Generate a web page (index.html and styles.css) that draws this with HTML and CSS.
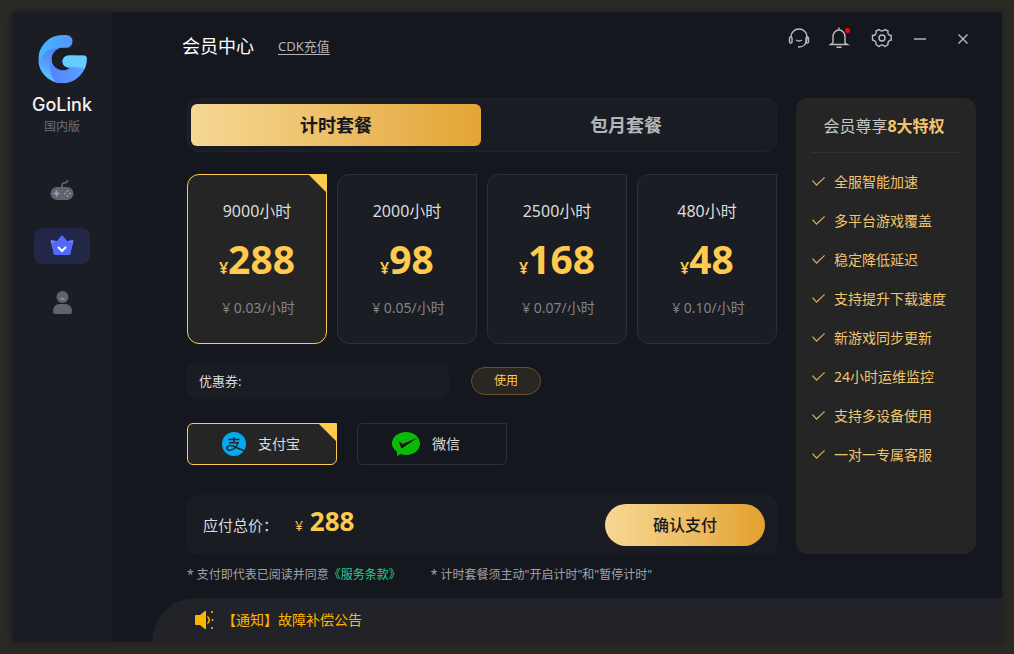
FILE: index.html
```html
<!DOCTYPE html>
<html lang="zh-CN">
<head>
    <meta charset="UTF-8">
    <meta name="viewport" content="width=device-width, initial-scale=1.0">
    <title>GoLink 会员中心</title>
    <link rel="stylesheet" href="styles.css">
</head>
<body>
    <div class="window">
        <aside class="sidebar">
            <svg class="logo" viewBox="0 0 146 146" aria-hidden="true">
                <defs>
                    <clipPath id="g-shape">
                        <path d="M73 0H84A19 19 0 0 1 84 38H74A34 34 0 1 0 97 97H91A18 18 0 0 1 91 61H136Q145 61 145 70A72 72 0 1 1 73 0Z"/>
                    </clipPath>
                    <linearGradient id="g-top" x1="0" y1="0" x2="1" y2="0">
                        <stop offset="0" stop-color="#3fbaff"/>
                        <stop offset="1" stop-color="#5a90fc"/>
                    </linearGradient>
                    <linearGradient id="g-left" x1="0.7" y1="0" x2="0.3" y2="1">
                        <stop offset="0" stop-color="#5580fb"/>
                        <stop offset="0.4" stop-color="#5595fc"/>
                        <stop offset="1" stop-color="#5fd0ff"/>
                    </linearGradient>
                    <linearGradient id="g-bottom" x1="0" y1="0" x2="1" y2="0">
                        <stop offset="0" stop-color="#5383ff"/>
                        <stop offset="1" stop-color="#5fa2fe"/>
                    </linearGradient>
                </defs>
                <g clip-path="url(#g-shape)">
                    <rect width="110" height="110" fill="url(#g-top)"/>
                    <path d="M0 84Q16 44 58 38L74 72L60 146H0Z" fill="url(#g-left)"/>
                    <path d="M40 70Q32 104 44 128L54 146H146V60H70V90Z" fill="url(#g-bottom)"/>
                    <path d="M70 58H146V106Q122 92 96 97H70Z" fill="#63cdff"/>
                </g>
            </svg>
            <div class="brand">GoLink</div>
            <div class="edition">国内版</div>
            <nav class="side-nav" aria-label="主导航">
                <a href="#games" aria-label="游戏">
                    <svg width="24" height="24" viewBox="0 0 24 24">
                        <path d="M12 9V7Q12 5.500 13.500 5.200L16 4.700Q17.500 4.300 17.500 2" fill="none" stroke="#5d6370" stroke-width="1.800"/>
                        <rect x="0.5" y="9" width="23" height="13" rx="6.5" fill="#5d6370"/>
                        <path d="M6.500 12.500V18.500M3.500 15.500H9.500" stroke="#9ea3ad" stroke-width="1.600"/>
                        <g fill="#9ea3ad"><circle cx="17.500" cy="13" r="0.900"/><circle cx="17.500" cy="18" r="0.900"/><circle cx="15" cy="15.500" r="0.900"/><circle cx="20" cy="15.500" r="0.900"/></g>
                    </svg>
                </a>
                <a class="active" href="#member" aria-label="会员">
                    <svg width="24" height="24" viewBox="0 0 24 24">
                        <path d="M0.500 7Q0.500 6 2 6L6 7L18 7L22 6Q23.500 6 23.500 7L20 20H4Z" fill="#6c80fa"/>
                        <path d="M2 9L6.500 7.500L11 2Q12 1 13 2L17.500 7.500L22.500 9L20.500 20Q20.300 21 19.500 21H4.700Q3.900 21 3.700 20Z" fill="#5269ff"/>
                        <path d="M8 13L12 17L16 13" fill="none" stroke="#fff" stroke-width="2"/>
                    </svg>
                </a>
                <a href="#user" aria-label="我的">
                    <svg width="24" height="24" viewBox="0 0 24 24">
                        <circle cx="12.500" cy="7" r="6" fill="#5d6370"/>
                        <path d="M10 8H15A2.500 2 0 0 1 10 8Z" fill="#9095a0"/>
                        <path d="M3 22Q3 14 10 14H15Q22 14 22 22Q22 24 20 24H5Q3 24 3 22Z" fill="#5d6370"/>
                    </svg>
                </a>
            </nav>
        </aside>

        <main class="main">
            <header class="topbar">
                <h1>会员中心</h1>
                <a class="cdk" href="#cdk">CDK充值</a>
                <div class="tools">
                    <button type="button" aria-label="客服">
                        <svg width="22" height="22" viewBox="0 0 22 22">
                            <path d="M3 10V9.500A8 7.500 0 0 1 19 9.500V12Q18 20 11 20H10"/>
                            <rect x="1.500" y="10" width="2.500" height="6" rx="1.200"/>
                            <rect x="18" y="10" width="2.500" height="6" rx="1.200"/>
                            <path d="M8 13Q11 15 14 13"/>
                        </svg>
                    </button>
                    <button class="bell" type="button" aria-label="消息">
                        <svg width="22" height="22" viewBox="0 0 22 22">
                            <path d="M4 16V9.500A6 6.500 0 0 1 16 9.500V16L18.500 17.500H1.500L4 16M10 0.500V3M7.500 20.300H12.500"/>
                        </svg>
                    </button>
                    <button type="button" aria-label="设置">
                        <svg width="22" height="22" viewBox="0 0 22 22">
                            <path d="M9 2.500Q10.500 4 12 4T15 2.500L18 4Q17.500 6.500 18.500 7.500T21.200 8.500V13Q19.500 13 18.500 14.500T18 17.500L15 19.500Q13.500 18 12 18T9 19.500L6 17.500Q6.500 15.500 5.500 14.500T2.500 13V8.500Q4.500 8.500 5.500 7.500T6 4Z"/>
                            <circle cx="12" cy="11" r="3"/>
                        </svg>
                    </button>
                    <button type="button" aria-label="最小化">
                        <svg width="22" height="22" viewBox="0 0 22 22"><path d="M3 12H15"/></svg>
                    </button>
                    <button type="button" aria-label="关闭">
                        <svg width="22" height="22" viewBox="0 0 22 22"><path d="M6.500 7.500L15.500 16.500M15.500 7.500L6.500 16.500"/></svg>
                    </button>
                </div>
            </header>

            <div class="content">
                <form class="order">
                    <div class="tabs">
                        <button class="active" type="button">计时套餐</button>
                        <button type="button">包月套餐</button>
                    </div>

                    <div class="plans">
                        <label class="option plan">
                            <input type="radio" name="plan" checked>
                            <span class="hours">9000小时</span>
                            <span class="price"><small>¥</small>288</span>
                            <span class="rate">¥ 0.03/小时</span>
                        </label>
                        <label class="option plan">
                            <input type="radio" name="plan">
                            <span class="hours">2000小时</span>
                            <span class="price"><small>¥</small>98</span>
                            <span class="rate">¥ 0.05/小时</span>
                        </label>
                        <label class="option plan">
                            <input type="radio" name="plan">
                            <span class="hours">2500小时</span>
                            <span class="price"><small>¥</small>168</span>
                            <span class="rate">¥ 0.07/小时</span>
                        </label>
                        <label class="option plan">
                            <input type="radio" name="plan">
                            <span class="hours">480小时</span>
                            <span class="price"><small>¥</small>48</span>
                            <span class="rate">¥ 0.10/小时</span>
                        </label>
                    </div>

                    <div class="coupon">
                        <div class="coupon-box">
                            <label for="coupon">优惠券:</label>
                            <input type="text" id="coupon">
                        </div>
                        <button type="button">使用</button>
                    </div>

                    <div class="payments">
                        <label class="option payment">
                            <input type="radio" name="payment" checked>
                            <svg width="24" height="24" viewBox="0 0 24 24">
                                <circle cx="12" cy="12" r="12" fill="#02a9f1"/>
                                <path d="M6.500 7.500H17.500M12 5V10.500M7 10.800H16Q15 14.500 11.500 17Q8.500 19 6 17.800Q4 16.500 5.500 14.500Q8 12.500 13 15L23 19" fill="none" stroke="#252525" stroke-width="1.500"/>
                            </svg>
                            <span>支付宝</span>
                        </label>
                        <label class="option payment">
                            <input type="radio" name="payment">
                            <svg width="28" height="24" viewBox="0 0 28 24">
                                <path d="M14 0C22 0 28 5 28 11.500S22 23 14 23Q11.500 23 9 22L5 24V19.800Q0 16.500 0 11.500C0 5 6 0 14 0Z" fill="#09bb07"/>
                                <path d="M6.500 9L10.500 12L26 5.500L10.500 16Q9.500 16.500 9 15.500Z" fill="#14171e"/>
                            </svg>
                            <span>微信</span>
                        </label>
                    </div>

                    <div class="total">
                        <span class="total-label">应付总价：</span>
                        <span class="amount"><small>¥</small> 288</span>
                        <button type="submit">确认支付</button>
                    </div>

                    <div class="notes">
                        <span>* 支付即代表已阅读并同意<a href="#terms">《服务条款》</a></span>
                        <span>* 计时套餐须主动"开启计时"和"暂停计时"</span>
                    </div>
                </form>

                <section class="benefits">
                    <h2>会员尊享<b>8大特权</b></h2>
                    <ul>
                        <li>全服智能加速</li>
                        <li>多平台游戏覆盖</li>
                        <li>稳定降低延迟</li>
                        <li>支持提升下载速度</li>
                        <li>新游戏同步更新</li>
                        <li>24小时运维监控</li>
                        <li>支持多设备使用</li>
                        <li>一对一专属客服</li>
                    </ul>
                </section>
            </div>

            <footer class="notice">
                <svg width="20" height="20" viewBox="0 0 20 20" aria-hidden="true">
                    <path d="M1 5H5L10 1H11V19H10L5 15H1Q0 15 0 14V6Q0 5 1 5Z" fill="#ffb400"/>
                    <path d="M12.500 6.500Q16 10 12.500 13.500" fill="none" stroke="#ffb400" stroke-width="1.500"/>
                    <g fill="#ffb400"><circle cx="17" cy="2" r="1"/><circle cx="17.500" cy="10" r="1"/><circle cx="17" cy="18" r="1"/></g>
                </svg>
                <a href="#notice">【通知】故障补偿公告</a>
            </footer>
        </main>
    </div>
</body>
</html>
```
FILE: styles.css
```css
* {
    box-sizing: border-box;
}
body {
    display: flex;
    min-height: 100vh;
    margin: 0;
    padding: 12px;
    background: #292a24;
    color: #dcdcdc;
    font-family: "Noto Sans", "Noto Sans CJK SC", sans-serif;
    font-size: 14px;
    line-height: 20px;
}
button, input {
    font: inherit;
    color: inherit;
}
button {
    padding: 0;
    border: none;
    background: none;
    cursor: pointer;
}
.window {
    flex: 1;
    display: flex;
    background: #14171e;
    box-shadow: 0 0 8px rgba(0, 0, 0, 0.3);
}

/* sidebar */
.sidebar {
    flex: none;
    width: 100px;
    padding-top: 23px;
    display: flex;
    flex-direction: column;
    align-items: center;
    background: #1b1d24;
}
.logo {
    width: 49px;
    height: 49px;
}
.brand {
    margin-top: 9px;
    color: #f2f2f2;
    font-family: Inter, sans-serif;
    font-size: 18px;
    line-height: 24px;
    font-weight: 500;
}
.edition {
    margin-top: 1px;
    color: #6b6e78;
    font-size: 12px;
    line-height: 18px;
}
.side-nav {
    margin-top: 36px;
    display: flex;
    flex-direction: column;
    gap: 20px;
}
.side-nav a {
    width: 56px;
    height: 36px;
    display: flex;
    align-items: center;
    justify-content: center;
    border-radius: 8px;
}
.side-nav .active {
    background: #222747;
}

/* main area */
.main {
    flex: 1;
    min-width: 0;
    display: flex;
    flex-direction: column;
}
.topbar {
    height: 68px;
    padding: 0 28px 0 70px;
    display: flex;
    align-items: center;
}
h1 {
    margin: 0;
    color: #fff;
    font-size: 18px;
    font-weight: 400;
}
.cdk {
    margin-left: 24px;
    color: #b4b5b7;
    font-size: 13px;
    text-underline-offset: 3px;
}
.tools {
    align-self: flex-start;
    margin-left: auto;
    padding-top: 15px;
    display: flex;
    gap: 19px;
}
.tools button {
    position: relative;
    height: 22px;
}
.tools svg {
    display: block;
    fill: none;
    stroke: #bbbcbe;
    stroke-width: 1.4px;
}
.bell::after {
    content: "";
    position: absolute;
    top: 1px;
    right: 1px;
    width: 5px;
    height: 5px;
    border-radius: 50%;
    background: #f00;
}
.content {
    display: flex;
    align-items: flex-start;
    gap: 19px;
    padding: 18px 26px 12px 75px;
}
.order {
    flex: 1;
    min-width: 0;
}
.tabs {
    display: flex;
    padding: 5px 5px 5px 3px;
    border: 1px solid #20232a;
    border-radius: 12px;
    background: #191c23;
}
.tabs button {
    flex: 1;
    height: 42px;
    border-radius: 6px;
    color: #b4b5b7;
    font-size: 18px;
    font-weight: 700;
}
.tabs .active {
    color: #16181e;
    background: linear-gradient(90deg, #f6d894, #ebb95d 60%, #e3a534);
}

/* selectable cards */
.option {
    position: relative;
    display: flex;
    align-items: center;
    overflow: hidden;
    border: 1px solid #2d3037;
    cursor: pointer;
}
.option input {
    position: absolute;
    inset: 0;
    margin: 0;
    appearance: none;
    cursor: pointer;
}
.option:has(input:checked) {
    border-color: #ffcb4f;
    background: #252525;
}
.option:has(input:checked)::after {
    content: "";
    position: absolute;
    top: 0;
    right: 0;
    width: 17px;
    height: 17px;
    background: #ffcb4f;
    clip-path: polygon(0 0, 100% 0, 100% 100%);
}
.plans {
    display: grid;
    grid-template-columns: repeat(4, 1fr);
    gap: 10px;
    margin-top: 22px;
}
.plan {
    flex-direction: column;
    height: 170px;
    padding-top: 24px;
    border-radius: 12px 0 12px 12px;
    background: #1a1d24;
}
.hours {
    font-size: 16px;
    line-height: 24px;
}
.price {
    margin-top: 10px;
    color: #ffcb4f;
    font-size: 39px;
    line-height: 52px;
    font-weight: 700;
}
.price small {
    font-size: 16px;
    font-weight: 600;
}
.rate {
    margin-top: 4px;
    padding-left: 3px;
    color: #828385;
}
.coupon {
    display: flex;
    align-items: center;
    gap: 22px;
    margin-top: 19px;
    font-size: 13px;
}
.coupon-box {
    display: flex;
    align-items: center;
    width: 262px;
    height: 36px;
    padding: 0 12px;
    border-radius: 8px;
    background: #191c23;
}
.coupon-box input {
    flex: 1;
    min-width: 0;
    border: none;
    outline: none;
    background: none;
}
.coupon button {
    width: 70px;
    height: 28px;
    border: 1px solid #64522d;
    border-radius: 14px;
    background: #2a2622;
    color: #ffcb4f;
    font-size: 12px;
}
.payments {
    display: flex;
    gap: 20px;
    margin-top: 24px;
}
.payment {
    gap: 12px;
    width: 150px;
    height: 42px;
    padding-left: 34px;
    border-radius: 6px 0 6px 6px;
}
.total {
    display: flex;
    align-items: center;
    height: 60px;
    margin-top: 30px;
    padding: 0 12px 0 16px;
    border-radius: 10px;
    background: #191c23;
}
.total-label {
    font-size: 15px;
}
.amount {
    margin-left: 17px;
    padding-bottom: 4px;
    color: #ffcb4f;
    font-size: 26px;
    font-weight: 700;
}
.amount small {
    font-size: 14px;
    font-weight: 400;
}
.total button {
    width: 160px;
    height: 42px;
    margin-left: auto;
    border-radius: 21px;
    background: linear-gradient(90deg, #f6d894, #ebb95d 60%, #e3a02c);
    color: #16181e;
    font-size: 16px;
    font-weight: 500;
}
.notes {
    display: flex;
    gap: 30px;
    margin-top: 10px;
    color: #a2a3a6;
    font-size: 12px;
    white-space: nowrap;
}
.notes a {
    color: #28cf8c;
    text-decoration: none;
}

/* benefits panel */
.benefits {
    flex: none;
    width: 180px;
    min-height: 456px;
    padding: 14px 16px;
    border-radius: 12px;
    background: #252525;
}
h2 {
    margin: 0;
    padding: 0 4px 12px 0;
    border-bottom: 1px solid #323232;
    color: #c6c6c6;
    font-size: 16px;
    line-height: 28px;
    font-weight: 400;
    text-align: center;
}
h2 b {
    color: #f1c46c;
}
.benefits ul {
    margin: 9px 0 0;
    padding: 0;
    list-style: none;
}
.benefits li {
    display: flex;
    align-items: center;
    gap: 9px;
    height: 39px;
    color: #f1c46c;
    white-space: nowrap;
}
.benefits li::before {
    content: "";
    width: 13px;
    height: 9px;
    background: #d9ad58;
    clip-path: polygon(0 44%, 8% 36%, 35% 80%, 94% 0, 100% 8%, 35% 100%);
}

/* notice bar */
.notice {
    display: flex;
    align-items: center;
    gap: 7px;
    height: 44px;
    margin-top: auto;
    margin-left: 40px;
    padding-left: 43px;
    border-top-left-radius: 44px;
    background: #222328;
}
.notice a {
    color: #ffb400;
    text-decoration: none;
}
```
